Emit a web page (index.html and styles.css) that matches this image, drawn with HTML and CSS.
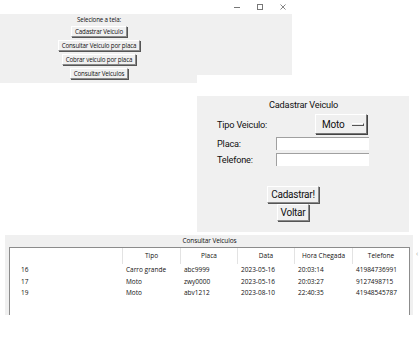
FILE: index.html
```html
<!DOCTYPE html>
<html>
<head>
<meta charset="utf-8">
<link rel="stylesheet" href="styles.css">
</head>
<body>
<div class="desk">
  <div class="win win-menu">
    <div class="titlebar">
      <svg class="ctl" width="10" height="10" viewBox="0 0 10 10"><path d="M2 5.5h6" stroke="#777" stroke-width="1"/></svg>
      <svg class="ctl" width="10" height="10" viewBox="0 0 10 10"><rect x="2.5" y="2.5" width="5" height="5" fill="none" stroke="#777" stroke-width="1"/></svg>
      <svg class="ctl" width="10" height="10" viewBox="0 0 10 10"><path d="M2.5 2.5l5 5M7.5 2.5l-5 5" stroke="#777" stroke-width="0.9"/></svg>
    </div>
    <div class="menu-body">
      <div class="menu-label">Selecione a tela:</div>
      <button class="tkbtn small">Cadastrar Veiculo</button>
      <button class="tkbtn small">Consultar Veiculo por placa</button>
      <button class="tkbtn small">Cobrar veiculo por placa</button>
      <button class="tkbtn small">Consultar Veiculos</button>
    </div>
  </div>

  <div class="win win-form">
    <div class="titlebar2"></div>
    <div class="form-body">
      <div class="form-title">Cadastrar Veiculo</div>
      <div class="row row-tipo">
        <span class="lbl">Tipo Veiculo:</span>
        <span class="menubtn">Moto <span class="ind"></span></span>
      </div>
      <div class="row">
        <span class="lbl lbl-short">Placa:</span>
        <span class="entry"></span>
      </div>
      <div class="row">
        <span class="lbl lbl-short">Telefone:</span>
        <span class="entry"></span>
      </div>
      <div class="actions">
        <button class="tkbtn big">Cadastrar!</button>
        <button class="tkbtn big">Voltar</button>
      </div>
    </div>
  </div>

  <div class="win win-list">
    <div class="list-title">Consultar Veiculos</div>
    <div class="tree">
      <div class="thead">
        <div class="th"></div>
        <div class="th">Tipo</div>
        <div class="th">Placa</div>
        <div class="th">Data</div>
        <div class="th">Hora Chegada</div>
        <div class="th last">Telefone</div>
      </div>
      <div class="tr">
        <div class="td id">16</div><div class="td">Carro grande</div><div class="td">abc9999</div><div class="td">2023-05-16</div><div class="td">20:03:14</div><div class="td">41984736991</div>
      </div>
      <div class="tr">
        <div class="td id">17</div><div class="td">Moto</div><div class="td">zwy0000</div><div class="td">2023-05-16</div><div class="td">20:03:27</div><div class="td">9127498715</div>
      </div>
      <div class="tr">
        <div class="td id">19</div><div class="td">Moto</div><div class="td">abv1212</div><div class="td">2023-08-10</div><div class="td">22:40:35</div><div class="td">41948545787</div>
      </div>
    </div>
    <div class="scrollmark">‹</div>
  </div>
</div>
</body>
</html>
```

FILE: styles.css
```css
* { box-sizing: border-box; }
html, body { margin: 0; padding: 0; background: #fff; }
body {
  width: 420px; height: 350px; overflow: hidden;
  font-family: "Open Sans", "Noto Sans", sans-serif;
  color: #111;
}
.desk { position: relative; width: 420px; height: 350px; }
.win { position: absolute; }

/* window 1 */
.win-menu { left: 0; top: 0; width: 292px; height: 83px; display: flex; flex-direction: column; }
.titlebar { height: 14px; background: #fff; display: flex; justify-content: flex-end; align-items: center; gap: 13px; padding-right: 4px; }
.ctl { display: block; }
.menu-body { flex: 1; background: #f0f0f0; display: flex; flex-direction: column; align-items: center; padding-top: 2px; gap: 3px; padding-right: 94px; }
.menu-label { font-size: 6.2px; line-height: 7px; letter-spacing: -0.15px; }
.tkbtn {
  font-family: inherit; color: #111; background: #f0f0f0;
  border: 1px solid; border-color: #fff #8a8a8a #8a8a8a #fff;
  box-shadow: 1px 1px 0 #555;
  margin: 0; cursor: default;
}
.tkbtn.small { font-size: 6.2px; line-height: 7px; height: 11px; padding: 0 3px; letter-spacing: -0.15px; }

/* window 2 */
.win-form { left: 197px; top: 75px; width: 212px; height: 157px; display: flex; flex-direction: column; font-family: Roboto, "Open Sans", sans-serif; }
.titlebar2 { height: 21px; background: #fff; }
.form-body { flex: 1; background: #f0f0f0; padding: 2px 0 0 20px; display: flex; flex-direction: column; font-size: 9.2px; letter-spacing: -0.2px; }
.form-title { text-align: center; margin-left: -20px; padding-left: 1px; line-height: 13px; }
.row { display: flex; align-items: center; height: 16px; }
.row-tipo { height: 22px; margin-top: 2px; }
.lbl { width: 98px; }
.lbl-short { width: 59px; }
.menubtn {
  display: flex; align-items: center; gap: 7px;
  width: 52px; height: 20px; padding-left: 6px;
  border: 1px solid; border-color: #fff #777 #777 #fff; box-shadow: 1px 1px 0 #444;
  font-size: 10px;
}
.ind { display: inline-block; width: 12px; height: 3px; border-top: 1px solid #fff; border-bottom: 1px solid #555; border-right: 1px solid #555; background: #e8e8e8; }
.entry { width: 93px; height: 13px; background: #fff; border-top: 1px solid #a0a0a0; border-left: 1px solid #a0a0a0; }
.actions { display: flex; flex-direction: column; align-items: center; margin-top: 19px; margin-left: -20px; padding-right: 20px; gap: 1px; }
.tkbtn.big { font-family: inherit; font-size: 10px; height: 17px; padding: 0 3px; letter-spacing: -0.25px; line-height: 14px; }

/* window 3 */
.win-list { left: 5px; top: 235px; width: 408px; height: 80px; background: #f0f0f0; padding: 0 3px 0 4px; }
.list-title { font-size: 6.5px; text-align: center; line-height: 12px; letter-spacing: -0.1px; }
.tree { background: #fff; border: 1px solid #8c8c8c; border-bottom: none; height: 68px; }
.thead, .tr { display: grid; grid-template-columns: 113px 58px 57px 57px 58px 1fr; }
.thead { height: 16px; }
.th { font-size: 6.5px; text-align: center; line-height: 16px; border-right: 1px solid #e3e3e3; }
.th.last { border-right: none; }
.tr { height: 11.5px; }
.td { font-size: 6.5px; line-height: 11.5px; padding-left: 3px; white-space: nowrap; }
.td.id { padding-left: 11px; }
.scrollmark { position: absolute; right: -5px; top: 14px; font-size: 7px; color: #aaa; }
```
